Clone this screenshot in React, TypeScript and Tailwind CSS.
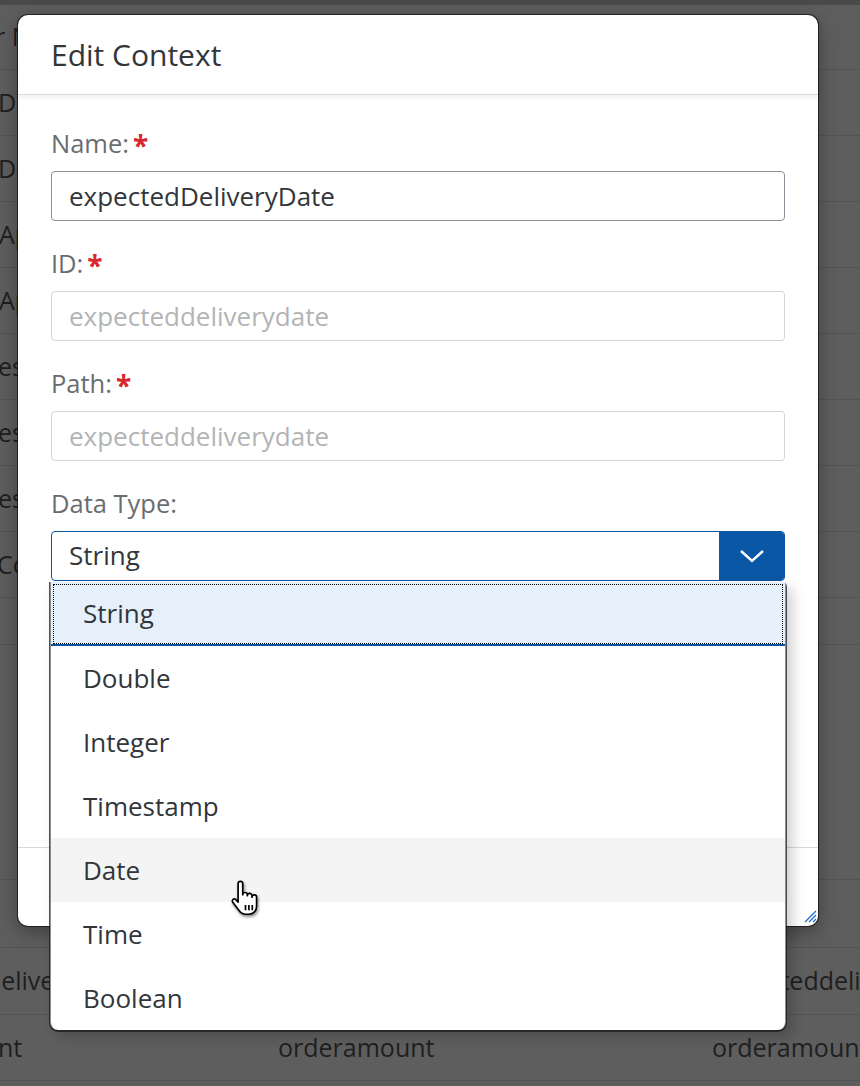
import React from 'react';

const font = { fontFamily: '"Open Sans", "Noto Sans", sans-serif' };

interface BgRow {
  first: string;
  firstOffset: string;
  second?: string;
  third?: string;
  height: string;
}

const bgRows: BgRow[] = [
  { first: 'Order Name', firstOffset: 'ml-[-64px]', height: 'h-[65px]' },
  { first: 'Delivery Date', firstOffset: 'ml-[-2px]', height: 'h-[66px]' },
  { first: 'Delivery Status', firstOffset: 'ml-[-2px]', height: 'h-[66px]' },
  { first: 'Approval Date', firstOffset: 'ml-[-1px]', height: 'h-[66px]' },
  { first: 'Approver', firstOffset: 'ml-[-1px]', height: 'h-[66px]' },
  { first: 'estimatedCost', firstOffset: 'ml-[-2px]', height: 'h-[66px]' },
  { first: 'estimatedTax', firstOffset: 'ml-[-2px]', height: 'h-[66px]' },
  { first: 'estimatedTotal', firstOffset: 'ml-[-2px]', height: 'h-[66px]' },
  { first: 'Comments', firstOffset: 'ml-[-3px]', height: 'h-[66px]' },
  { first: '', firstOffset: 'ml-0', height: 'h-[47px]' },
  { first: '', firstOffset: 'ml-0', height: 'h-[235px]' },
  { first: '', firstOffset: 'ml-0', height: 'h-[68px]' },
  {
    first: 'Expected Delivery Date',
    firstOffset: 'ml-[-130px]',
    second: 'expecteddeliverydate',
    third: 'expecteddeliverydate',
    height: 'h-[67px]',
  },
  {
    first: 'Order Amount',
    firstOffset: 'ml-[-147px]',
    second: 'orderamount',
    third: 'orderamount',
    height: 'h-[66px]',
  },
];

const Required: React.FC = () => (
  <span className="ml-[4px] text-[28px] font-bold text-[#d9262c] leading-none relative top-[2px]">*</span>
);

const FieldLabel: React.FC<{ text: string; required?: boolean }> = ({ text, required }) => (
  <div className="h-[36px] flex items-center text-[25.5px] text-[#6a6d70] mb-[10px]">
    <span>{text}</span>
    {required && <Required />}
  </div>
);

const HandCursor: React.FC = () => (
  <svg width="31" height="37" viewBox="0 0 20 24" className="drop-shadow-[1px_2px_1.5px_rgba(0,0,0,0.45)]">
    <path
      d="M5.2 2.4a1.5 1.5 0 0 1 3 0V9.6a1.5 1.5 0 0 1 3 0v.6a1.5 1.5 0 0 1 3 0v1a1.5 1.5 0 0 1 3 0V17c0 3-2 5.2-5 5.2H10.2c-2 0-3.4-1-4.4-2.4L1.6 14.2a1.3 1.3 0 0 1 2-1.6l1.6 1.8Z"
      fill="#fff"
      stroke="#000"
      strokeWidth="1.1"
      strokeLinejoin="round"
    />
    <path d="M10 16.2v3.4M12.2 16.2v3.4M14.4 16.2v3.4" stroke="#000" strokeWidth="1.1" />
  </svg>
);

const options = ['String', 'Double', 'Integer', 'Timestamp', 'Date', 'Time', 'Boolean'];

const App: React.FC = () => {
  return (
    <div className="relative w-[860px] h-[1086px] overflow-hidden bg-[#5e5e5e]" style={font}>
      {/* dimmed table behind the dialog */}
      <div className="h-[5px] bg-[#4a4a4a]" />
      {bgRows.map((row, i) => (
        <div key={i} className={`${row.height} flex items-center border-b border-[#535353] text-[25px] text-[#1e1f21]`}>
          <div className="w-[50px] overflow-hidden whitespace-nowrap">
            <span className={`block ${row.firstOffset}`}>{row.first}</span>
          </div>
          <div className="w-[228px]" />
          <div className="w-[434px] whitespace-nowrap">{row.second}</div>
          <div className="flex-1 whitespace-nowrap overflow-hidden">{row.third}</div>
        </div>
      ))}

      {/* dialog */}
      <div className="absolute left-[18px] top-[15px] w-[800px] h-[911px] bg-white rounded-[10px] flex flex-col shadow-[0_0_0_1px_rgba(20,20,20,0.75),0_6px_20px_rgba(0,0,0,0.35)]">
        <div className="h-[80px] flex items-center px-[33px] border-b border-[#d9d9d9] shadow-[0_2px_5px_rgba(0,0,0,0.07)] rounded-t-[10px]">
          <h1 className="text-[30px] text-[#32363a] leading-none">Edit Context</h1>
        </div>

        <div className="flex-1 px-[33px] pt-[30px]">
          <FieldLabel text="Name:" required />
          <div className="h-[50px] border border-[#89919a] rounded-[4px] flex items-center px-[17px] text-[26px] text-[#32363a]">
            expectedDeliveryDate
          </div>

          <div className="mt-[24px]">
            <FieldLabel text="ID:" required />
            <div className="h-[50px] border border-[#d3d6d9] rounded-[4px] flex items-center px-[17px] text-[26px] text-[#b2b4b6]">
              expecteddeliverydate
            </div>
          </div>

          <div className="mt-[24px]">
            <FieldLabel text="Path:" required />
            <div className="h-[50px] border border-[#d3d6d9] rounded-[4px] flex items-center px-[17px] text-[26px] text-[#b2b4b6]">
              expecteddeliverydate
            </div>
          </div>

          <div className="mt-[24px]">
            <FieldLabel text="Data Type:" />
            <div className="h-[50px] border border-[#0854a0] rounded-[4px] flex items-stretch text-[26px] text-[#32363a] overflow-hidden">
              <div className="flex-1 flex items-center px-[17px] pb-[2px]">String</div>
              <div className="w-[65px] bg-[#0a57a5] flex items-center justify-center">
                <svg width="26" height="14" viewBox="0 0 26 14">
                  <path d="M2 2l11 10 11-10" fill="none" stroke="#fff" strokeWidth="2.4" />
                </svg>
              </div>
            </div>
          </div>
        </div>

        <div className="h-[79px] border-t border-[#d9d9d9] relative rounded-b-[10px]">
          <svg width="16" height="16" viewBox="0 0 16 16" className="absolute right-[1px] bottom-[3px]">
            <path d="M15 4L4 15M15 8L8 15M15 12L12 15" stroke="#1f6fc5" strokeWidth="1.3" />
          </svg>
        </div>
      </div>

      {/* open select list */}
      <div className="absolute left-[50px] top-[582px] w-[736px] bg-white border-x border-[#8d8d8d] rounded-b-[8px] rounded-tr-[4px] shadow-[0_1px_0_1px_rgba(25,25,25,0.75),6px_6px_14px_rgba(0,0,0,0.2)] text-[26px] text-[#32363a]">
        {options.map((opt) => {
          if (opt === 'String') {
            return (
              <div
                key={opt}
                className="h-[64px] flex items-center pl-[32px] bg-[#e5f0fa] border-b-2 border-[#0854a0] outline-1 outline-dotted outline-black outline-offset-[-3px]"
              >
                {opt}
              </div>
            );
          }
          return (
            <div
              key={opt}
              className={`h-[64px] flex items-center pl-[32px] ${opt === 'Date' ? 'bg-[#f4f4f4]' : ''} ${opt === 'Boolean' ? 'rounded-b-[8px]' : ''}`}
            >
              {opt}
              {opt === 'Date' && (
                <span className="ml-[90px] mt-[56px]">
                  <HandCursor />
                </span>
              )}
            </div>
          );
        })}
      </div>
    </div>
  );
};

export default App;
